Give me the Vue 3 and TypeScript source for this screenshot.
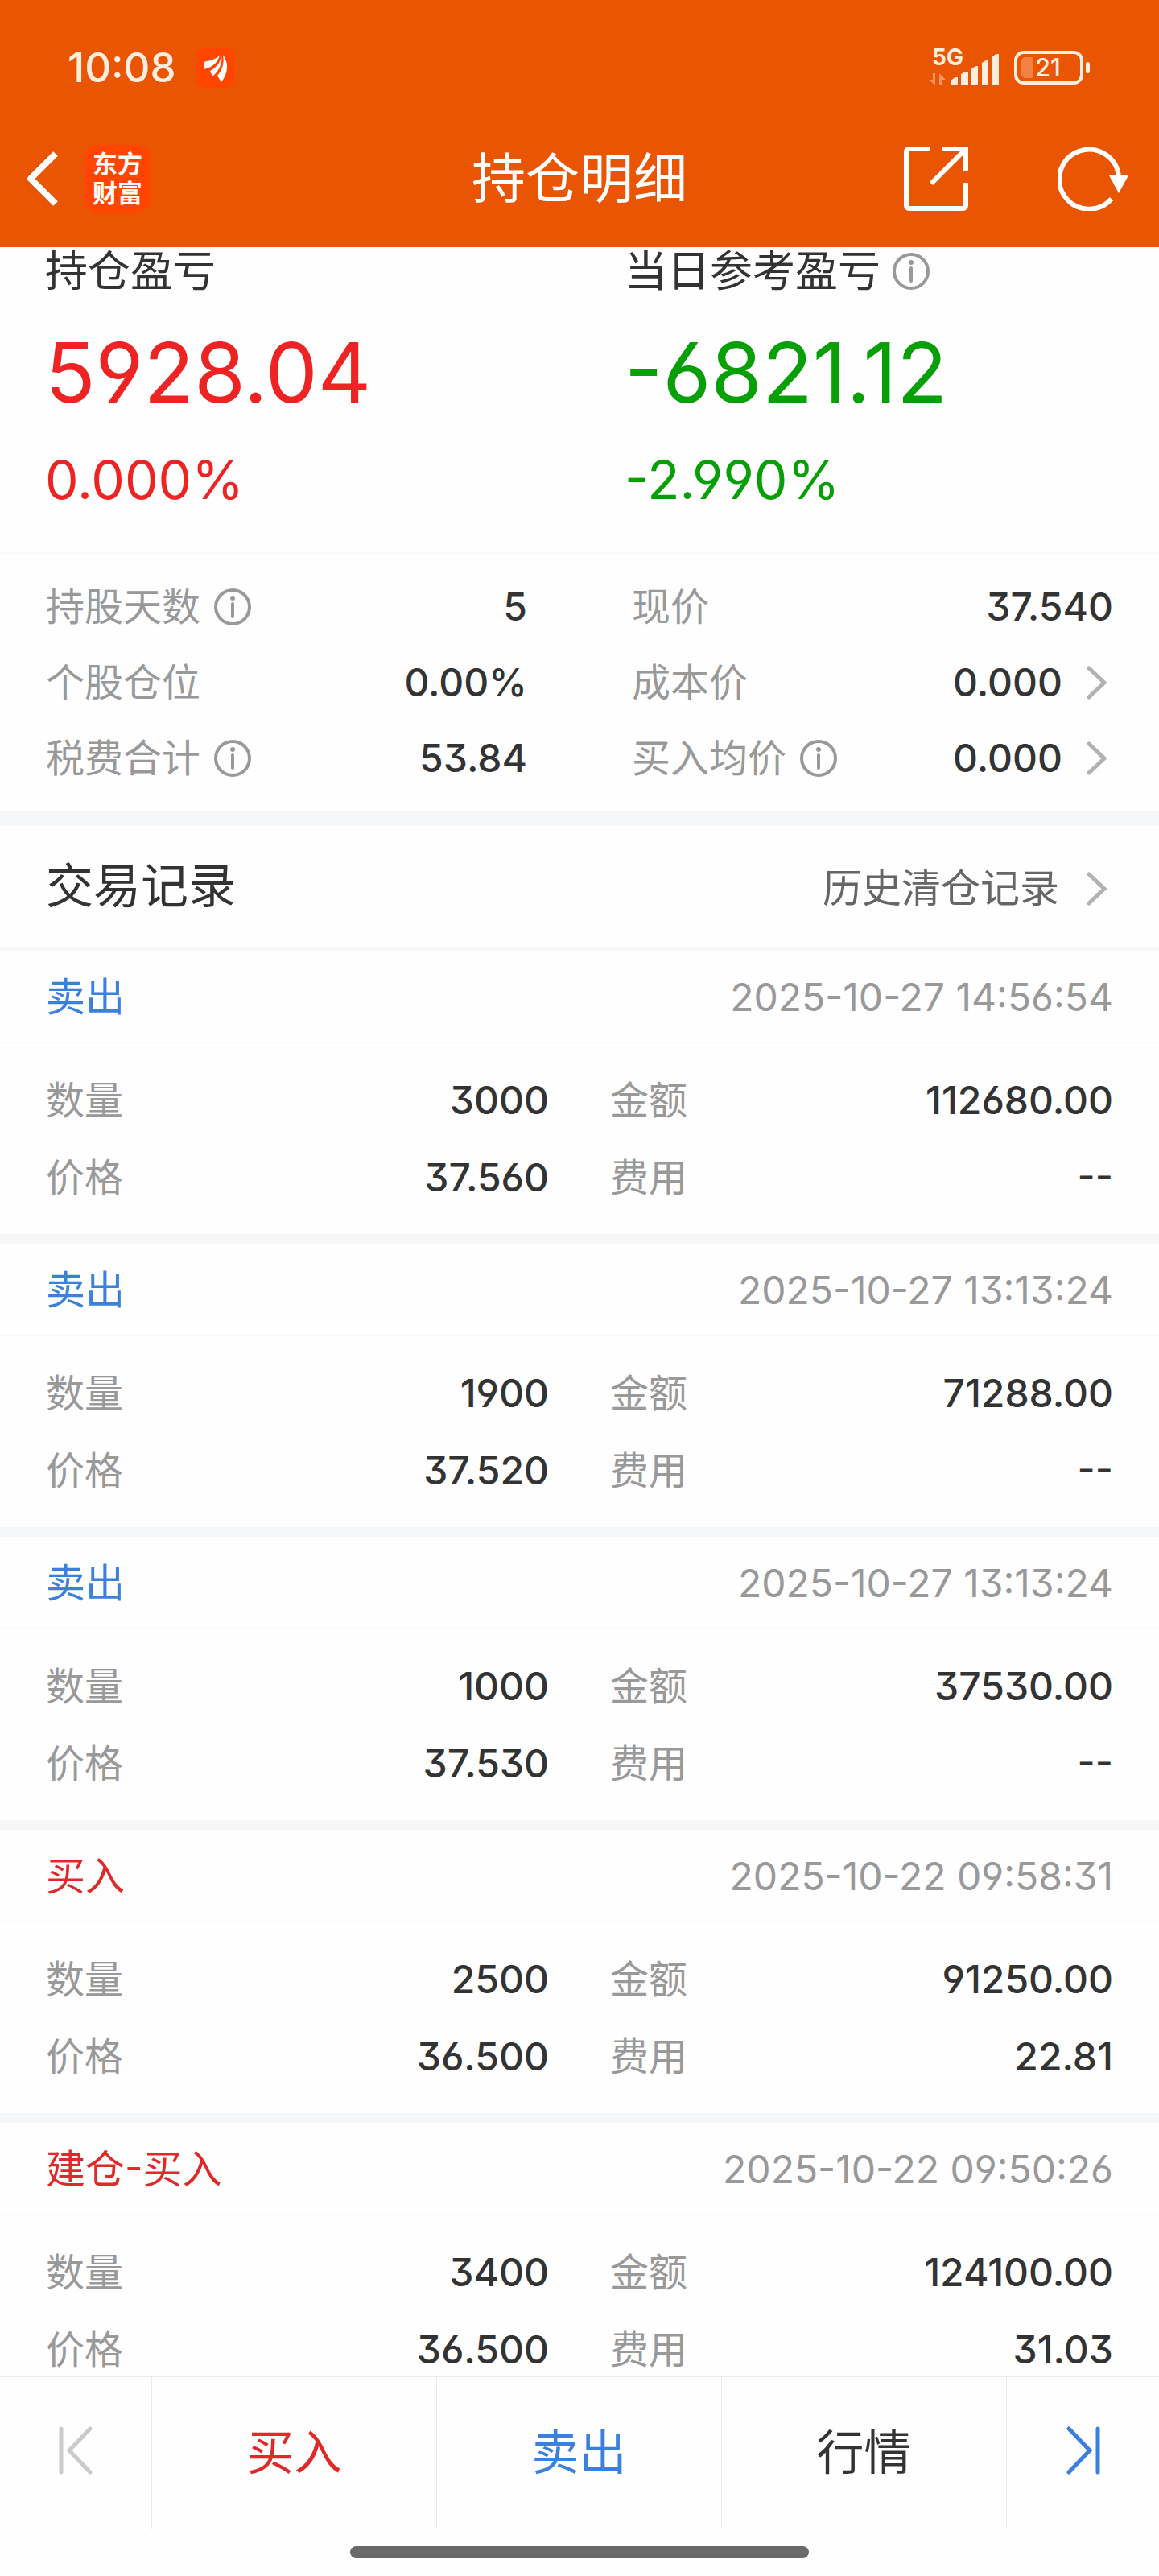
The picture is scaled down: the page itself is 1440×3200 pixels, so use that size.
<script setup lang="ts">
interface Stat {
  label: string
  value: string
  info?: boolean
  link?: boolean
}

interface Trade {
  side: 'buy' | 'sell'
  title: string
  time: string
  quantity: string
  amount: string
  price: string
  fee: string
}

const stats: Stat[] = [
  { label: '持股天数', value: '5', info: true },
  { label: '现价', value: '37.540' },
  { label: '个股仓位', value: '0.00%' },
  { label: '成本价', value: '0.000', link: true },
  { label: '税费合计', value: '53.84', info: true },
  { label: '买入均价', value: '0.000', info: true, link: true },
]

const trades: Trade[] = [
  { side: 'sell', title: '卖出', time: '2025-10-27 14:56:54', quantity: '3000', amount: '112680.00', price: '37.560', fee: '--' },
  { side: 'sell', title: '卖出', time: '2025-10-27 13:13:24', quantity: '1900', amount: '71288.00', price: '37.520', fee: '--' },
  { side: 'sell', title: '卖出', time: '2025-10-27 13:13:24', quantity: '1000', amount: '37530.00', price: '37.530', fee: '--' },
  { side: 'buy', title: '买入', time: '2025-10-22 09:58:31', quantity: '2500', amount: '91250.00', price: '36.500', fee: '22.81' },
  { side: 'buy', title: '建仓-买入', time: '2025-10-22 09:50:26', quantity: '3400', amount: '124100.00', price: '36.500', fee: '31.03' },
]

const tradeFields = (t: Trade) => [
  { label: '数量', value: t.quantity },
  { label: '金额', value: t.amount },
  { label: '价格', value: t.price },
  { label: '费用', value: t.fee },
]
</script>

<template>
  <div class="app">
    <header class="top">
      <div class="status">
        <div class="status-group">
          <span class="clock">10:08</span>
          <svg class="app-badge" viewBox="0 0 49 49" aria-hidden="true">
            <rect width="49" height="49" rx="11" fill="#ff4500" />
            <path d="M30 8C26 14 18 15 10 17V26C20 24 28 18 30 8Z" fill="#fff" />
            <path d="M32 8C31 18 26 24 18 28L21 35C29 28 34 19 32 8Z" fill="#fff" />
            <path d="M34 8C36 19 33 27 27 34L32 42C40 32 42 18 34 8Z" fill="#fff" />
          </svg>
        </div>
        <div class="status-group status-right">
          <div class="network">
            <span class="net-type">5G</span>
            <svg class="signal" viewBox="0 0 88 46" aria-hidden="true">
              <path d="M8 30V45L0 38H5V30ZM13 45V30L21 38H16V45Z" fill="#f79767" />
              <g fill="#ffeee0">
                <path d="M27 45V39L33 35H36V45Z" />
                <path d="M40 45V31L46 28H49V45Z" />
                <path d="M53 45V24L59 21H61V45Z" />
                <path d="M66 45V17L71 14H74V45Z" />
                <path d="M79 45V9L84 6H87V45Z" />
              </g>
            </svg>
          </div>
          <div class="battery">
            <span class="battery-fill"></span>
            <span class="battery-text">21</span>
          </div>
        </div>
      </div>
      <div class="nav">
        <div class="nav-side">
          <button class="icon-btn" type="button" aria-label="返回">
            <svg class="back" width="34" height="68" viewBox="6 0 34 68" fill="none" stroke="#fff" stroke-width="8">
              <path d="M37 3L6 34L37 65" stroke-linejoin="round" />
            </svg>
          </button>
          <div class="logo"><span>东方</span><span>财富</span></div>
        </div>
        <h1 class="title">持仓明细</h1>
        <div class="nav-side nav-right">
          <button class="icon-btn" type="button" aria-label="分享">
            <svg width="80" height="80" viewBox="0 0 80 80" fill="none" stroke="#fff" stroke-width="6">
              <path d="M33 3H7Q3 3 3 7V73Q3 77 7 77H73Q77 77 77 73V45M48 3H77V30M77 3L34 46" />
            </svg>
          </button>
          <button class="icon-btn" type="button" aria-label="刷新">
            <svg width="88" height="80" viewBox="0 0 88 80" fill="none" stroke="#fff" stroke-width="6">
              <path d="M67 65A37 37 0 1 1 76 38" />
              <path d="M64 36H88L76 58Z" fill="#fff" stroke="none" />
            </svg>
          </button>
        </div>
      </div>
    </header>

    <main class="content">
      <section class="summary">
        <div class="summary-col up">
          <h2 class="summary-label">持仓盈亏</h2>
          <p class="summary-value">5928.04</p>
          <p class="summary-rate">0.000%</p>
        </div>
        <div class="summary-col down">
          <h2 class="summary-label">
            当日参考盈亏
            <svg class="info" viewBox="0 0 46 46" aria-hidden="true">
              <circle cx="23" cy="23" r="21" /><path d="M23 19V35" /><circle class="dot" cx="23" cy="12" r="3" />
            </svg>
          </h2>
          <p class="summary-value">-6821.12</p>
          <p class="summary-rate">-2.990%</p>
        </div>
      </section>

      <dl class="stats">
        <div v-for="s in stats" :key="s.label" class="row">
          <dt>
            {{ s.label }}
            <svg v-if="s.info" class="info" viewBox="0 0 46 46" aria-hidden="true">
              <circle cx="23" cy="23" r="21" /><path d="M23 19V35" /><circle class="dot" cx="23" cy="12" r="3" />
            </svg>
          </dt>
          <dd>
            {{ s.value }}
            <svg v-if="s.link" class="chevron" viewBox="0 0 26 42" aria-hidden="true"><path d="M3 3L22 21L3 39" /></svg>
          </dd>
        </div>
      </dl>

      <section class="records">
        <div class="records-head">
          <h2>交易记录</h2>
          <a href="#history">
            历史清仓记录
            <svg class="chevron" viewBox="0 0 26 42" aria-hidden="true"><path d="M3 3L22 21L3 39" /></svg>
          </a>
        </div>
        <article v-for="(t, i) in trades" :key="i" class="trade">
          <div class="trade-head">
            <h3 :class="t.side">{{ t.title }}</h3>
            <time>{{ t.time }}</time>
          </div>
          <dl class="trade-body">
            <div v-for="f in tradeFields(t)" :key="f.label" class="row">
              <dt>{{ f.label }}</dt>
              <dd>{{ f.value }}</dd>
            </div>
          </dl>
        </article>
      </section>
    </main>

    <footer class="bottom">
      <nav class="actions">
        <button class="step" type="button" aria-label="上一只" disabled>
          <svg width="44" height="60" viewBox="0 0 44 60" fill="none" stroke="#cacaca" stroke-width="5" stroke-linecap="round">
            <path d="M4 3V57M40 3L14 30L40 57" />
          </svg>
        </button>
        <button class="action buy" type="button">买入</button>
        <button class="action sell" type="button">卖出</button>
        <button class="action" type="button">行情</button>
        <button class="step" type="button" aria-label="下一只">
          <svg width="44" height="60" viewBox="0 0 44 60" fill="none" stroke="#3a80dc" stroke-width="5" stroke-linecap="round">
            <path d="M40 3V57M4 3L30 30L4 57" />
          </svg>
        </button>
      </nav>
      <div class="home-bar"></div>
    </footer>
  </div>
</template>

<style>
body {
  margin: 0;
  background: #fefefe;
}
</style>

<style scoped>
.app {
  display: flex;
  flex-direction: column;
  height: 100vh;
  overflow: hidden;
  color: #333;
  background: #fefefe;
  font-family: Inter, "Noto Sans CJK SC", sans-serif;
  font-size: 48px;
  line-height: 72px;
  font-feature-settings: "cv03", "cv04", "cv09", "case";
}

h1, h2, h3, p, dl, dt, dd {
  margin: 0;
  font-weight: 400;
}

button {
  padding: 0;
  border: 0;
  background: none;
  color: inherit;
  font: inherit;
}

svg {
  display: block;
  flex: none;
}

/* The list scrolls underneath the header. */
.top {
  position: relative;
  z-index: 1;
  flex: none;
  background: #ea5504;
  color: #fff;
}

.status {
  display: flex;
  justify-content: space-between;
  align-items: center;
  height: 168px;
  padding: 0 86px 0 84px;
  color: #ffeee0;
}

.status-group {
  display: flex;
  align-items: center;
  gap: 24px;
}

.status-right {
  gap: 18px;
}

.clock {
  font-size: 51px;
  font-weight: 500;
}

.app-badge {
  width: 49px;
  height: 49px;
}

.network {
  position: relative;
}

.signal {
  width: 88px;
  height: 46px;
}

.net-type {
  position: absolute;
  top: -4px;
  left: 4px;
  font-size: 28px;
  font-weight: 700;
  line-height: 28px;
}

.battery {
  position: relative;
  display: flex;
  align-items: center;
  box-sizing: border-box;
  width: 86px;
  height: 42px;
  margin-right: 8px;
  padding-left: 5px;
  gap: 3px;
  border: 4px solid #ffeee0;
  border-radius: 12px;
}

.battery::after {
  content: "";
  position: absolute;
  right: -12px;
  width: 5px;
  height: 14px;
  border-radius: 3px;
  background: #ffeee0;
}

.battery-fill {
  width: 14px;
  height: 26px;
  border-radius: 5px 0 0 5px;
  background: #f38145;
}

.battery-text {
  font-size: 31px;
  font-weight: 500;
  line-height: 34px;
}

.nav {
  display: flex;
  align-items: center;
  height: 108px;
  padding: 0 38px 31px;
}

.nav-side {
  display: flex;
  flex: 1;
  align-items: center;
  gap: 32px;
}

.back {
  overflow: visible;
}

.nav-right {
  justify-content: flex-end;
  gap: 111px;
}

.logo {
  display: flex;
  flex-direction: column;
  align-items: center;
  justify-content: center;
  width: 84px;
  height: 84px;
  border-radius: 18px;
  background: #ff4500;
  font-size: 31px;
  font-weight: 700;
  line-height: 36px;
}

.title {
  font-size: 67px;
  line-height: 96px;
}

.content {
  flex: 1;
  min-height: 0;
  margin-top: -24px;
  padding-top: 24px;
  overflow-y: auto;
  scrollbar-width: none;
}

.summary {
  display: grid;
  grid-template-columns: 1fr 1fr;
  height: 379px;
  border-bottom: 2px solid #f8f9fa;
}

.summary-col {
  padding-left: 56px;
}

.summary-label {
  display: flex;
  align-items: center;
  gap: 15px;
  font-size: 53px;
  line-height: 60px;
}

.summary-value {
  margin-top: 31px;
  font-size: 103px;
  line-height: 130px;
}

.summary-rate {
  margin-top: 23px;
  font-size: 66px;
  line-height: 90px;
}

.up .summary-value,
.up .summary-rate {
  color: #ee2424;
}

.down .summary-value,
.down .summary-rate {
  color: #06a006;
}

.info {
  width: 46px;
  height: 46px;
  fill: none;
  stroke: #999;
  stroke-width: 4;
  stroke-linecap: round;
}

.info .dot {
  fill: #999;
  stroke: none;
}

.chevron {
  width: 26px;
  height: 42px;
  fill: none;
  stroke: #b2b2b2;
  stroke-width: 5;
  stroke-linecap: round;
}

.stats {
  display: grid;
  grid-template-columns: 1fr 1fr;
  column-gap: 130px;
  padding: 19px 57px 18px;
  border-bottom: 19px solid #f6f7f9;
}

.row {
  display: flex;
  justify-content: space-between;
  align-items: center;
  height: 94px;
}

.row dt,
.row dd {
  display: flex;
  align-items: center;
}

.row dt {
  gap: 17px;
  color: #999;
}

.row dd {
  gap: 30px;
  font-weight: 500;
}

.row .chevron,
.records-head .chevron {
  margin-right: 7px;
}

.records-head {
  display: flex;
  justify-content: space-between;
  align-items: center;
  height: 150px;
  padding: 0 57px;
  border-bottom: 5px solid #f6f7f9;
}

.records-head h2 {
  font-size: 59px;
}

.records-head a {
  display: flex;
  align-items: center;
  gap: 34px;
  padding-top: 6px;
  color: #666;
  font-size: 49px;
  text-decoration: none;
}

.trade {
  border-bottom: 12px solid #f6f7f9;
}

.trade-head {
  display: flex;
  justify-content: space-between;
  align-items: center;
  height: 111px;
  padding: 2px 57px 0;
  border-bottom: 2px solid #f8f9fa;
}

.trade-head h3 {
  font-size: 49px;
}

.trade-head time {
  color: #999;
}

.trade-body {
  display: grid;
  grid-template-columns: 1fr 1fr;
  column-gap: 76px;
  padding: 23px 57px 22px;
}

.trade-body .row {
  height: 96px;
}

.buy {
  color: #e02a2a;
}

.sell {
  color: #3a80dc;
}

.bottom {
  position: relative;
  flex: none;
  border-top: 1px solid #ebebeb;
  background: #fefefe;
}

.actions {
  display: flex;
  height: 188px;
}

.action {
  flex: 1;
  border-right: 1px solid #ebebeb;
  font-size: 59px;
}

.step {
  display: flex;
  align-items: center;
  justify-content: center;
  width: 189px;
  padding-bottom: 6px;
}

.step:first-child {
  border-right: 1px solid #ebebeb;
}

.action.buy {
  color: #e02a2a;
}

.action.sell {
  color: #3a80dc;
}

.home-bar {
  width: 570px;
  height: 15px;
  margin: 22px auto;
  border-radius: 8px;
  background: #696969;
}
</style>
